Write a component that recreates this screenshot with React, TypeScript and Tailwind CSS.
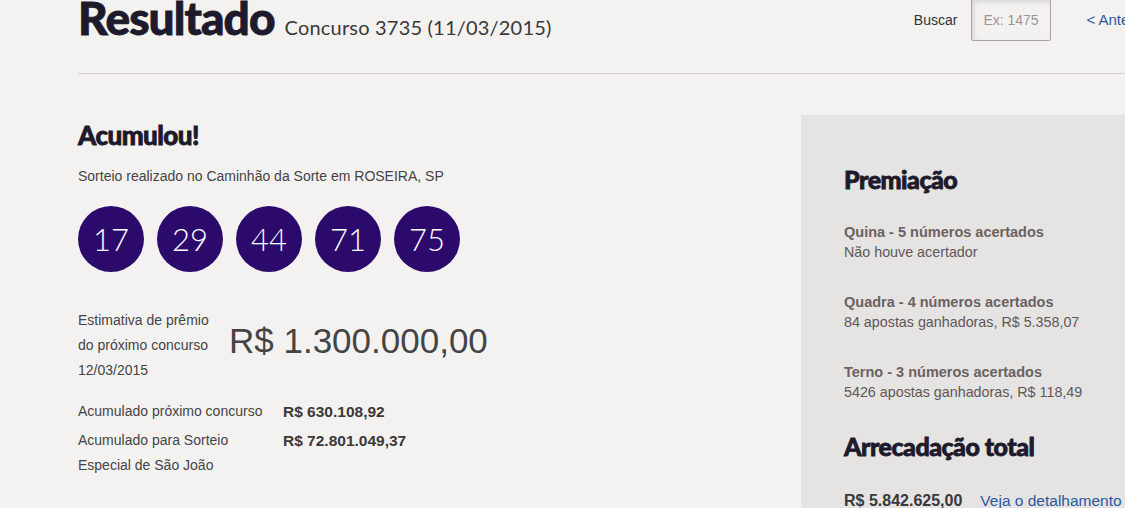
const balls = ["17", "29", "44", "71", "75"];

const faixas = [
  { titulo: "Quina - 5 números acertados", texto: "Não houve acertador" },
  { titulo: "Quadra - 4 números acertados", texto: "84 apostas ganhadoras, R$ 5.358,07" },
  { titulo: "Terno - 3 números acertados", texto: "5426 apostas ganhadoras, R$ 118,49" },
];

const heading =
  "font-['Lato',sans-serif] font-black tracking-[-0.02em] text-[#1d1a2c] [-webkit-text-stroke:0.8px_#1d1a2c]";
const arial = "font-['Liberation_Sans',Arial,sans-serif]";

export default function App() {
  return (
    <div className={`h-[508px] w-[1125px] overflow-hidden bg-[#f4f2f1] ${arial}`}>
      <header className="ml-[78px] flex h-[74px] items-start border-b border-[#d3d0cf]">
        <div className="-mt-[10px] flex items-baseline gap-[10px]">
          <h1 className={`${heading} text-[46px] leading-[56px]`}>Resultado</h1>
          <span className="font-['Lato',sans-serif] text-[20px] tracking-[0.01em] text-[#3a3838]">
            Concurso 3735 (11/03/2015)
          </span>
        </div>
        <div className="-mr-[26px] ml-auto flex shrink-0 items-center">
          <span className="text-[14px] text-[#333]">Buscar</span>
          <input
            placeholder="Ex: 1475"
            className="-mt-px ml-[14px] h-[42px] w-[80px] rounded-[2px] border border-[#a9a5a5] bg-[#f4f2f1] px-[11px] text-[14px] text-[#333] shadow-[inset_2px_2px_4px_rgba(0,0,0,0.12)] outline-none placeholder:text-[#9a9696]"
          />
          <a className="ml-[35px] whitespace-nowrap text-[15px] text-[#2a5a9c]">&lt; Anterior</a>
        </div>
      </header>

      <div className="mt-[41px] flex">
        <section className="w-[801px] shrink-0 pl-[78px]">
          <h2 className={`${heading} mt-[4px] text-[26px] leading-[32px]`}>Acumulou!</h2>
          <p className="mt-[15px] text-[14px] text-[#444]">Sorteio realizado no Caminhão da Sorte em ROSEIRA, SP</p>
          <div className="mt-[19px] flex gap-[13px]">
            {balls.map((b) => (
              <div
                key={b}
                className="flex h-[66px] w-[66px] items-center justify-center rounded-full bg-[#2b0a6b] font-['Lato',sans-serif] text-[31px] font-light text-white"
              >
                {b}
              </div>
            ))}
          </div>
          <div className="mt-[36px] flex items-center">
            <p className="w-[151px] text-[14px] leading-[25px] text-[#444]">
              Estimativa de prêmio
              <br />
              do próximo concurso
              <br />
              12/03/2015
            </p>
            <p className="-mt-[8px] text-[35px] text-[#444]">R$ 1.300.000,00</p>
          </div>
          <div className="mt-[15px] grid grid-cols-[205px_1fr] text-[14px] leading-[27px] text-[#444]">
            <span>Acumulado próximo concurso</span>
            <span className="text-[15.5px] font-bold text-[#3a3838]">R$ 630.108,92</span>
            <span className="mt-[3px] leading-[25px]">
              Acumulado para Sorteio
              <br />
              Especial de São João
            </span>
            <span className="mt-[3px] text-[15.5px] font-bold leading-[25px] text-[#3a3838]">R$ 72.801.049,37</span>
          </div>
        </section>

        <aside className="h-[400px] flex-1 bg-[#e6e3e3] pl-[43px] pt-[48px]">
          <h2 className={`${heading} text-[25px] leading-[32px]`}>Premiação</h2>
          <div className="mt-[27px] flex flex-col gap-[30px]">
            {faixas.map((f) => (
              <div key={f.titulo} className="whitespace-nowrap leading-[20px]">
                <p className="text-[14.5px] font-bold text-[#6a6261]">{f.titulo}</p>
                <p className="text-[14.3px] text-[#5e5857]">{f.texto}</p>
              </div>
            ))}
          </div>
          <h2 className={`${heading} mt-[28px] text-[25px] leading-[32px]`}>Arrecadação total</h2>
          <div className="mt-[27px] flex items-baseline gap-[18px] whitespace-nowrap">
            <span className="text-[16px] font-bold text-[#3a3838]">R$ 5.842.625,00</span>
            <a className="text-[15.5px] text-[#2a5a9c]">Veja o detalhamento</a>
          </div>
        </aside>
      </div>
    </div>
  );
}
